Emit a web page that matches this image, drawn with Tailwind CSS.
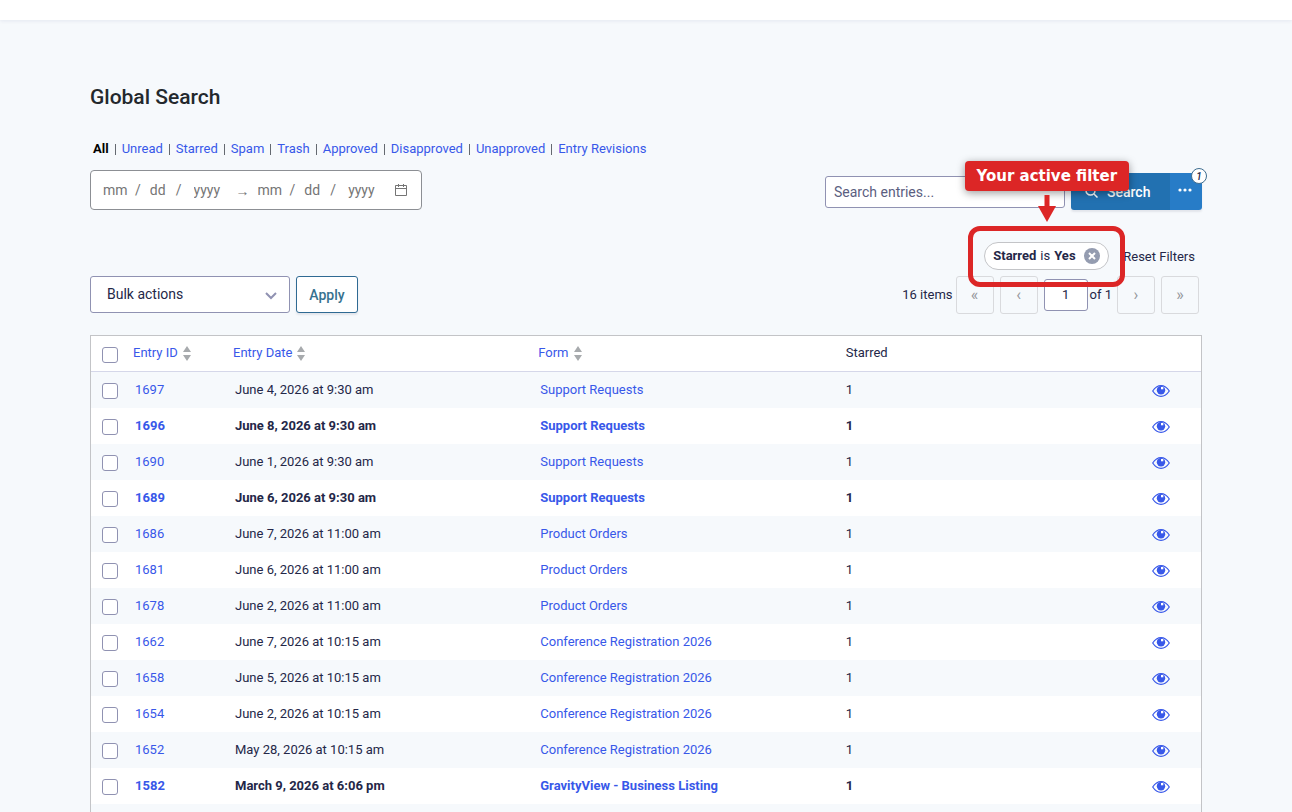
<!DOCTYPE html>
<html lang="en">
<head>
    <meta charset="UTF-8">
    <meta name="viewport" content="width=device-width, initial-scale=1">
    <title>Global Search</title>
    <script src="https://cdn.jsdelivr.net/npm/@tailwindcss/browser@4"></script>
</head>
<body class="min-h-screen bg-[#f6f9fc] font-['Roboto',sans-serif] text-[13px] text-[#242748]">
    <header class="h-5 bg-white shadow-[0_1px_4px_rgba(18,25,97,0.08)]"></header>

    <main class="px-[90px] pt-[65px]">
        <h1 class="text-[21px] leading-6 font-medium text-[#23282d]">Global Search</h1>

        <nav class="mt-7 ml-[3px] flex h-6 items-center leading-6 text-[#3858e9]">
            <a href="#" class="font-bold text-black">All</a>
            <span class="mx-[6px] h-[11px] w-px bg-[#646970]"></span>
            <a href="#">Unread</a>
            <span class="mx-[6px] h-[11px] w-px bg-[#646970]"></span>
            <a href="#">Starred</a>
            <span class="mx-[6px] h-[11px] w-px bg-[#646970]"></span>
            <a href="#">Spam</a>
            <span class="mx-[6px] h-[11px] w-px bg-[#646970]"></span>
            <a href="#">Trash</a>
            <span class="mx-[6px] h-[11px] w-px bg-[#646970]"></span>
            <a href="#">Approved</a>
            <span class="mx-[6px] h-[11px] w-px bg-[#646970]"></span>
            <a href="#">Disapproved</a>
            <span class="mx-[6px] h-[11px] w-px bg-[#646970]"></span>
            <a href="#">Unapproved</a>
            <span class="mx-[6px] h-[11px] w-px bg-[#646970]"></span>
            <a href="#">Entry Revisions</a>
        </nav>

        <div class="mt-[9px] flex items-start justify-between">
            <!-- Date range -->
            <div class="flex h-10 w-[332px] items-center rounded-[4px] border border-[#8c8f94] bg-white pl-3 text-sm text-[#757575]">
                <input type="text" aria-label="Start month" placeholder="mm" class="w-8 outline-none placeholder:text-[#757575]">/
                <input type="text" aria-label="Start day" placeholder="dd" class="ml-[9px] w-[26px] outline-none placeholder:text-[#757575]">/
                <input type="text" aria-label="Start year" placeholder="yyyy" class="ml-3 w-[42px] outline-none placeholder:text-[#757575]">
                <span class="w-[22px] pt-[2px] text-sm">→</span>
                <input type="text" aria-label="End month" placeholder="mm" class="w-8 outline-none placeholder:text-[#757575]">/
                <input type="text" aria-label="End day" placeholder="dd" class="ml-[9px] w-[26px] outline-none placeholder:text-[#757575]">/
                <input type="text" aria-label="End year" placeholder="yyyy" class="ml-3 w-[47px] outline-none placeholder:text-[#757575]">
                <button type="button" aria-label="Open calendar">
                    <svg class="size-3" viewBox="0 0 12 12" fill="none" stroke="#757575">
                        <path d="M.5 1.500h11v10H.5zM.5 4.500h11M3.500 0v3M8.500 0v3"/>
                    </svg>
                </button>
            </div>

            <!-- Search -->
            <form class="flex items-start pt-[3px]">
                <input type="search" aria-label="Search entries" placeholder="Search entries..." class="mt-[3px] h-8 w-60 rounded-[3px] border border-[#9092b2] bg-white px-2 text-sm outline-none placeholder:text-[#5b5e80]">
                <div class="relative ml-[6px] flex h-[37px] rounded-[3px] text-white shadow-[0_2px_2px_rgba(58,58,87,0.1)]">
                    <button type="button" class="flex w-[99px] items-center rounded-l-[3px] bg-[#2271b1] pl-[14px] text-sm font-medium">
                        <svg class="mr-[9px] size-[13px]" viewBox="0 0 13 13" fill="none" stroke="currentColor" stroke-width="1.5">
                            <circle cx="5.5" cy="5.5" r="4.5"/>
                            <path d="M9 9l3.5 3.5"/>
                        </svg>
                        Search
                    </button>
                    <button type="button" aria-label="Search options" class="flex w-8 items-center justify-center rounded-r-[3px] bg-[#277cc7] pr-[2px] pb-1">
                        <svg class="h-1 w-[14px]" viewBox="0 0 14 4" fill="currentColor">
                            <circle cx="2" cy="2" r="1.6"/><circle cx="7" cy="2" r="1.6"/><circle cx="12" cy="2" r="1.6"/>
                        </svg>
                    </button>
                    <span class="absolute -top-[5px] -right-[5px] flex size-4 items-center justify-center rounded-full border border-[#3e6d8f] bg-white text-[10px] font-medium text-[#242748] italic">1</span>
                </div>
            </form>
        </div>

        <!-- Active filters -->
        <div class="mt-8 flex h-7 items-center justify-end pr-[7px]">
            <div class="relative flex h-7 w-[125px] items-center rounded-full border border-[#c3c4c7] bg-white pl-2">
                <strong class="font-bold">Starred</strong><span class="mx-1">is</span><strong class="font-bold">Yes</strong>
                <button type="button" aria-label="Remove filter" class="mr-2 ml-auto flex size-4 shrink-0 items-center justify-center rounded-full bg-[#949cb0]">
                    <svg class="size-2" viewBox="0 0 8 8" fill="none" stroke="white" stroke-width="2"><path d="M1 1l6 6M7 1L1 7"/></svg>
                </button>
                <!-- Callout -->
                <div class="pointer-events-none absolute -inset-x-[17px] -top-[17px] -bottom-[18px] z-10 rounded-[12px] border-[5px] border-[#dc2626]"></div>
                <div class="pointer-events-none absolute bottom-[47px] left-1/2 z-20 flex -translate-x-1/2 flex-col items-center">
                    <span class="flex h-[30px] w-[164px] items-center justify-center rounded-[4px] bg-[#dc2626] font-['DejaVu_Sans',sans-serif] text-[15px] font-bold whitespace-nowrap text-white shadow-[0_2px_8px_rgba(0,0,0,0.4)]">Your active filter</span>
                    <svg class="mt-1 h-[27px] w-[18px]" viewBox="0 0 18 27" fill="#dc2626"><path d="M6.500 0h5v11H18L9 27L0 11h6.500z"/></svg>
                </div>
            </div>
            <a href="#" class="ml-[14px] pt-px">Reset Filters</a>
        </div>

        <!-- Bulk actions and paging -->
        <div class="mt-[6px] flex items-start justify-between">
            <form class="flex gap-[6px]">
                <div class="relative">
                    <select aria-label="Bulk actions" class="h-[37px] w-[200px] appearance-none rounded-[3px] border border-[#9092b2] bg-white px-4 pb-px text-sm">
                        <option>Bulk actions</option>
                    </select>
                    <svg class="pointer-events-none absolute top-4 right-[13px] h-[8px] w-3" viewBox="0 0 12 8" fill="none" stroke="#9092b2" stroke-width="2"><path d="M1 1l5 5 5-5"/></svg>
                </div>
                <button type="button" class="h-[37px] w-[62px] rounded-[3px] border border-[#2f6a93] bg-white text-sm font-medium text-[#36718f] shadow-[0_2px_2px_rgba(58,58,87,0.1)]">Apply</button>
            </form>
            <div class="flex items-center pr-[3px]">
                <span class="mr-[3px]">16 items</span>
                <button type="button" disabled aria-label="First page" class="h-[38px] w-[38px] rounded-[3px] border border-[#d9dadd] text-base text-[#94969b]">«</button>
                <button type="button" disabled aria-label="Previous page" class="ml-[6px] h-[38px] w-[38px] rounded-[3px] border border-[#d9dadd] text-base text-[#94969b]">‹</button>
                <input type="text" aria-label="Current page" value="1" class="ml-[6px] h-8 w-11 rounded-[3px] border border-[#9092b2] bg-white pb-px text-center">
                <span class="mr-[5px] ml-[2px]">of 1</span>
                <button type="button" disabled aria-label="Next page" class="h-[38px] w-[38px] rounded-[3px] border border-[#d9dadd] text-base text-[#94969b]">›</button>
                <button type="button" disabled aria-label="Last page" class="ml-[6px] h-[38px] w-[38px] rounded-[3px] border border-[#d9dadd] text-base text-[#94969b]">»</button>
            </div>
        </div>

        <div class="mt-[21px] border border-[#c3c4c7] bg-white">
            <table class="w-full table-fixed border-separate border-spacing-0 text-left">
                <thead>
                    <tr class="h-9">
                        <th class="w-[34px] border-b border-[#d5d7e9] pt-[3px] pl-[11px]"><input type="checkbox" aria-label="Select all" class="block size-4 appearance-none rounded-[3px] border border-[#9092b2] bg-white"></th>
                        <th class="w-[100px] border-b border-[#d5d7e9] px-2 pb-px font-normal"><a href="#" class="flex items-center gap-[5px] text-[#3858e9]">Entry ID <svg class="mt-px h-[15px] w-2" viewBox="0 0 8 15" fill="#a7aaad"><path d="M4 0l4 6H0zM0 9h8l-4 6z"/></svg></a></th>
                        <th class="w-[27.5%] border-b border-[#d5d7e9] px-2 pb-px font-normal"><a href="#" class="flex items-center gap-[5px] text-[#3858e9]">Entry Date <svg class="mt-px h-[15px] w-2" viewBox="0 0 8 15" fill="#a7aaad"><path d="M4 0l4 6H0zM0 9h8l-4 6z"/></svg></a></th>
                        <th class="w-[27.7%] border-b border-[#d5d7e9] px-2 pb-px font-normal"><a href="#" class="flex items-center gap-[5px] text-[#3858e9]">Form <svg class="mt-px h-[15px] w-2" viewBox="0 0 8 15" fill="#a7aaad"><path d="M4 0l4 6H0zM0 9h8l-4 6z"/></svg></a></th>
                        <th class="border-b border-[#d5d7e9] px-2 pb-px font-normal">Starred</th>
                        <td class="w-[60px] border-b border-[#d5d7e9]"></td>
                    </tr>
                </thead>
                <tbody id="entries"></tbody>
            </table>
        </div>
    </main>

    <script>
        // [id, date, form, unread]
        const entries = [
            [1697, 'June 4, 2026 at 9:30 am', 'Support Requests', false],
            [1696, 'June 8, 2026 at 9:30 am', 'Support Requests', true],
            [1690, 'June 1, 2026 at 9:30 am', 'Support Requests', false],
            [1689, 'June 6, 2026 at 9:30 am', 'Support Requests', true],
            [1686, 'June 7, 2026 at 11:00 am', 'Product Orders', false],
            [1681, 'June 6, 2026 at 11:00 am', 'Product Orders', false],
            [1678, 'June 2, 2026 at 11:00 am', 'Product Orders', false],
            [1662, 'June 7, 2026 at 10:15 am', 'Conference Registration 2026', false],
            [1658, 'June 5, 2026 at 10:15 am', 'Conference Registration 2026', false],
            [1654, 'June 2, 2026 at 10:15 am', 'Conference Registration 2026', false],
            [1652, 'May 28, 2026 at 10:15 am', 'Conference Registration 2026', false],
            [1582, 'March 9, 2026 at 6:06 pm', 'GravityView - Business Listing', true]
        ];

        document.getElementById('entries').innerHTML = entries.map(([id, date, form, unread]) => `
            <tr class="h-9 odd:bg-[#f6f9fc] ${unread ? 'font-bold' : 'font-normal'}">
                <td class="pt-[2px] pl-[11px]"><input type="checkbox" aria-label="Select entry ${id}" class="block size-4 appearance-none rounded-[3px] border border-[#9092b2] bg-white"></td>
                <td class="px-[10px]"><a href="#" class="text-[#3858e9]">${id}</a></td>
                <td class="px-[10px]">${date}</td>
                <td class="px-[10px]"><a href="#" class="text-[#3858e9]">${form}</a></td>
                <td class="px-2">1</td>
                <td class="pt-px pl-[11px]"><a href="#" aria-label="View entry ${id}" class="block w-[18px]">
                    <svg class="h-3 w-[18px]" viewBox="0 0 18 12"><path d="M.7 6C3 2.500 5.800.7 9 .7S15 2.500 17.300 6C15 9.500 12.200 11.300 9 11.300S3 9.500.7 6z" fill="none" stroke="#3858e9" stroke-width="1.200"/><circle cx="9" cy="5.200" r="4.200" fill="#3858e9"/><rect x="9" y="2" width="2.300" height="2.300" fill="white"/></svg>
                </a></td>
            </tr>`).join('') + '<tr class="h-9 bg-[#f6f9fc]"><td colspan="6"></td></tr>';
    </script>
</body>
</html>
